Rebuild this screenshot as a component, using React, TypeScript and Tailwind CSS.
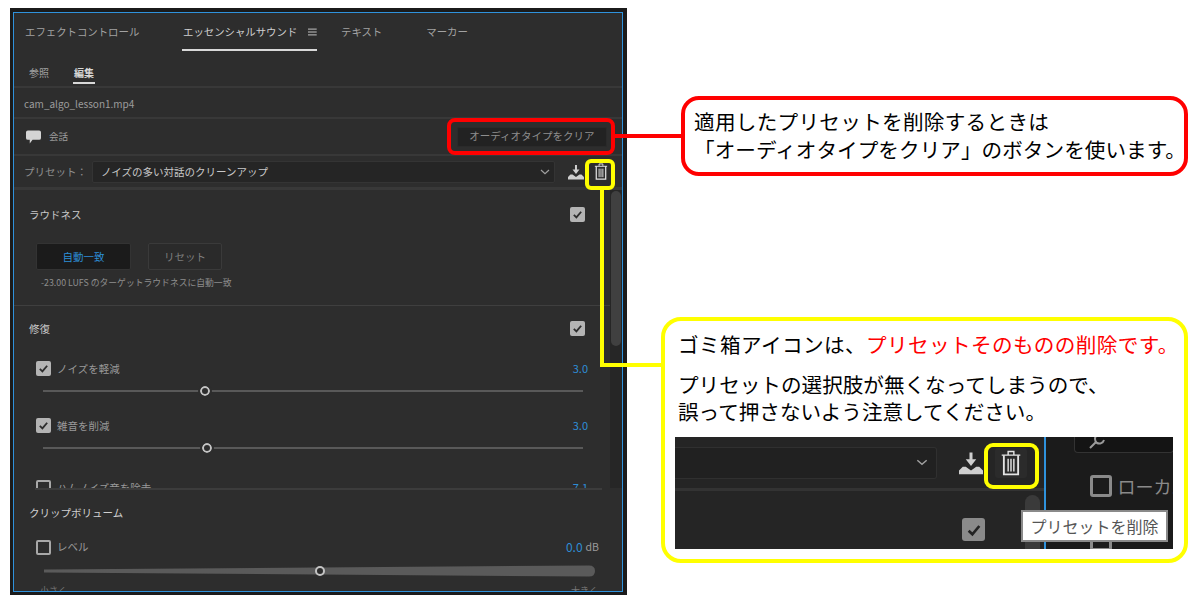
const Check = ({ on = false }: { on?: boolean }) =>
  on ? (
    <span className="flex h-[15px] w-[15px] shrink-0 items-center justify-center rounded-[2px] bg-[#b4b4b4]">
      <svg viewBox="0 0 12 12" className="h-[11px] w-[11px]">
        <path d="M2 6.5 L4.8 9.2 L10 3" fill="none" stroke="#2d2d2d" strokeWidth="2" />
      </svg>
    </span>
  ) : (
    <span className="h-[15px] w-[15px] shrink-0 rounded-[2px] border-2 border-[#a8a8a8]" />
  );

const Trash = ({ className }: { className: string }) => (
  <svg viewBox="0 0 14 18" className={className} fill="none" stroke="#e4e4e4" strokeWidth="1">
    <path d="M0.5 3.5 H13.5 M5 3 V1 H9 V3" />
    <path d="M2 3.5 V17 H12 V3.5" strokeWidth="1.3" />
    <path d="M5 6 V15 M7 6 V15 M9 6 V15" />
  </svg>
);

const Download = ({ className }: { className: string }) => (
  <svg viewBox="0 0 16 16" className={className} fill="#cfcfcf">
    <path d="M7 1 H9 V5.5 H11.5 L8 10 L4.5 5.5 H7 Z" />
    <path d="M0 15.5 V13 L2.5 10.5 H4.5 L8 13 L11.5 10.5 H13.5 L16 13 V15.5 Z" />
  </svg>
);

const Chevron = ({ className }: { className: string }) => (
  <svg viewBox="0 0 10 6" className={className} fill="none" stroke="#a0a0a0" strokeWidth="1.2">
    <path d="M1 1 L5 4.6 L9 1" />
  </svg>
);

function SliderRow({ label, value, knob, on, mb }: { label: string; value: string; knob: number; on: boolean; mb: string }) {
  return (
    <div className={mb}>
      <div className="flex h-[15px] items-center pl-[22px] pr-[22px]">
        <Check on={on} />
        <span className="ml-[6px] text-[10.5px] text-[#9a9a9a]">{label}</span>
        <span className="ml-auto text-[11px] text-[#2d8ed6]">{value}</span>
      </div>
      <div className="relative ml-[29px] mr-[27px] mt-[14px] h-[2px] bg-[#595959]">
        <span
          className="absolute top-[-4px] box-content h-[6px] w-[6px] rounded-full border-2 border-[#c4c4c4] bg-[#2d2d2d] outline-2 outline-[#2d2d2d]"
          style={{ left: knob - 5 }}
        />
      </div>
    </div>
  );
}

export default function App() {
  return (
    <div className="relative flex h-[600px] w-[1200px] items-start overflow-hidden bg-white font-['Noto_Sans_CJK_JP','Noto_Sans',sans-serif] text-black">
      <div className="ml-[10px] mt-[8px] h-[587px] w-[617px] bg-[#1b1b1b] pb-[3px] pl-[3px] pr-[4px] pt-[4px]">
        <div className="flex h-full flex-col overflow-hidden border-[1.5px] border-[#2f92dc] bg-[#2d2d2d]">
          {/* tabs */}
          <div className="flex h-[38px] shrink-0 items-stretch whitespace-nowrap pl-[11px] text-[10.4px] text-[#a2a2a2]">
            <span className="flex w-[114px] items-center">エフェクトコントロール</span>
            <span className="ml-[43px] flex w-[135px] items-center border-b-2 border-[#d8d8d8] pl-[1px] pt-[2px] text-[#d0d0d0]">
              エッセンシャルサウンド
              <svg viewBox="0 0 9 8" className="ml-[11px] h-[8px] w-[9px]" stroke="#c8c8c8" strokeWidth="1">
                <path d="M0 1 H9 M0 4 H9 M0 7 H9" />
              </svg>
            </span>
            <span className="ml-[24px] flex items-center">テキスト</span>
            <span className="ml-[44px] flex items-center">マーカー</span>
          </div>
          <div className="flex h-[37px] shrink-0 items-end gap-[25px] border-b-2 border-[#383838] pb-[2px] pl-[15px] text-[10px]">
            <span className="pb-[4px] text-[#a2a2a2]">参照</span>
            <span className="-ml-px border-b-2 border-[#d8d8d8] px-[1px] pb-[2px] font-bold text-[#d8d8d8]">編集</span>
          </div>
          {/* clip */}
          <div className="flex h-[31px] shrink-0 items-center border-b-2 border-[#383838] pl-[10px] pt-[1px] text-[10px] text-[#9c9c9c]">
            cam_algo_lesson1.mp4
          </div>
          <div className="flex h-[37px] shrink-0 items-center border-b-2 border-[#383838] pl-[12px] pr-[15px]">
            <svg viewBox="0 0 16 14" className="h-[14px] w-[15px]" fill="#d4d4d4">
              <path d="M2 0 H14 Q16 0 16 2 V8 Q16 10 14 10 H7 L4 14 V10 H2 Q0 10 0 8 V2 Q0 0 2 0 Z" />
            </svg>
            <span className="ml-[8px] text-[9.5px] text-[#9c9c9c]">会話</span>
            <button className="ml-auto flex h-[20px] w-[150px] items-center justify-center rounded-[2px] border border-[#2a2a2a] bg-[#222222] pb-[1px] text-[10.5px] text-[#8e8e8e]">
              オーディオタイプをクリア
            </button>
          </div>
          <div className="flex h-[34px] shrink-0 items-center border-b-[3px] border-[#383838] pl-[10px] pr-[14px]">
            <span className="w-[68px] text-[10.5px] text-[#8e8e8e]">プリセット：</span>
            <div className="flex h-[22px] w-[464px] items-center justify-between rounded-[2px] border border-[#343434] bg-[#252525] pl-[8px] pr-[4px] text-[10.5px] text-[#c8c8c8]">
              ノイズの多い対話のクリーンアップ
              <Chevron className="h-[6px] w-[10px]" />
            </div>
            <Download className="ml-[13px] h-[16px] w-[16px]" />
            <Trash className="ml-[10px] h-[17px] w-[14px]" />
          </div>
          {/* scrolling area */}
          <div className="flex h-[298px] shrink-0 overflow-hidden">
            <div className="min-w-0 flex-1 overflow-hidden">
              <div className="flex h-[116px] flex-col border-b border-[#3f3f3f] pl-[15px]">
                <div className="mt-[17px] flex h-[15px] items-center pr-[25px]">
                  <span className="text-[10.5px] text-[#c8c8c8]">ラウドネス</span>
                  <span className="ml-auto"><Check on /></span>
                </div>
                <div className="ml-[7px] mt-[21px] flex gap-[17px] text-[10.5px]">
                  <button className="h-[27px] w-[95px] rounded-[2px] border border-[#333333] bg-[#1b1b1b] text-[#2d8ed6]">自動一致</button>
                  <button className="h-[27px] w-[74px] rounded-[2px] border border-[#3a3a3a] bg-[#2a2a2a] text-[#7e7e7e]">リセット</button>
                </div>
                <p className="ml-[12px] mt-[6px] text-[8.8px] text-[#8e8e8e]">-23.00 LUFS のターゲットラウドネスに自動一致</p>
              </div>
              <div className="mt-[15px] flex h-[15px] items-center pl-[15px] pr-[25px]">
                <span className="text-[10.5px] text-[#c8c8c8]">修復</span>
                <span className="ml-auto"><Check on /></span>
              </div>
              <div className="mt-[25px]">
                <SliderRow label="ノイズを軽減" value="3.0" knob={162} on mb="mb-[26px]" />
                <SliderRow label="雑音を削減" value="3.0" knob={164} on mb="mb-[31px]" />
                <SliderRow label="ハムノイズ音を除去" value="7.1" knob={164} on={false} mb="" />
              </div>
            </div>
            <div className="w-[12px] shrink-0 bg-[#262626] px-[1px] pt-[1px]">
              <div className="h-[155px] rounded-full bg-[#404040]" />
            </div>
          </div>
          {/* clip volume */}
          <div className="min-h-0 flex-1 overflow-hidden">
            <div className="ml-[21px] mr-[20px] h-[2px] bg-[#3c3c3c]" />
            <div className="mt-[15px] pl-[15px] text-[10.5px] text-[#d0d0d0]">クリップボリューム</div>
            <div className="mt-[19px] flex h-[15px] items-center pl-[22px] pr-[23px]">
              <Check />
              <span className="ml-[6px] text-[10.5px] text-[#9a9a9a]">レベル</span>
              <span className="ml-auto text-[12px] text-[#2d8ed6]">0.0</span>
              <span className="ml-[3px] text-[10.5px] text-[#9a9a9a]">dB</span>
            </div>
            <div className="relative ml-[30px] mr-[27px] mt-[10px] h-[12px]">
              <svg viewBox="0 0 551 12" preserveAspectRatio="none" className="h-[12px] w-[551px]">
                <path d="M0 4.5 L545 0.5 Q551 0.5 551 6 Q551 11.5 545 11.5 L0 7.5 Z" fill="#5a5a5a" />
              </svg>
              <span className="absolute left-[271px] top-[1px] box-content h-[6px] w-[6px] rounded-full border-2 border-[#c4c4c4] bg-[#2d2d2d]" />
            </div>
            <div className="mt-[7px] flex justify-between pl-[26px] pr-[24px] text-[9px] text-[#777777]">
              <span>小さく</span>
              <span>大きく</span>
            </div>
          </div>
        </div>
      </div>

      <div className="ml-[34px] flex w-[527px] flex-col items-end">
        <div className="mt-[96px] h-[80px] w-[507px] rounded-[18px] border-[4px] border-[#ff0000] bg-white pl-[9px] pt-[7px] text-[20.6px] leading-[28px]">
          <p className="tracking-[0.3px]">適用したプリセットを削除するときは</p>
          <p className="whitespace-nowrap tracking-[0.05px]">「オーディオタイプをクリア」のボタンを使います。</p>
        </div>
        <div className="mt-[141px] h-[246px] w-[527px] rounded-[20px] border-[4px] border-[#ffff00] bg-white pl-[10px] pt-[9px]">
          <p className="whitespace-nowrap pl-[3px] text-[20.6px] leading-[28px] tracking-[0.4px]">
            ゴミ箱アイコンは、<span className="text-[#ff0000]">プリセットそのものの削除です。</span>
          </p>
          <p className="mt-[13px] whitespace-nowrap pl-[3px] text-[20.6px] leading-[27px]">
            プリセットの選択肢が無くなってしまうので、
            <br />
            誤って押さないよう注意してください。
          </p>
          <div className="relative mt-[12px] flex h-[112px] w-[498px] overflow-hidden bg-[#252525]">
            <div className="flex h-full w-[369px] shrink-0 flex-col">
              <div className="flex h-[54px] shrink-0 items-center border-b-[3px] border-[#333333]">
                <div className="flex h-[32px] w-[262px] items-center justify-end rounded-r-[3px] border border-l-0 border-[#303030] bg-[#212121] pr-[7px]">
                  <Chevron className="h-[7px] w-[14px]" />
                </div>
                <Download className="ml-[21px] h-[24px] w-[26px]" />
                <div className="ml-[11px] flex h-[30px] w-[32px] items-center justify-center rounded-[3px] bg-[#2b2b2b]">
                  <Trash className="h-[26px] w-[20px]" />
                </div>
              </div>
              <div className="flex flex-1 justify-end pr-[59px] pt-[27px]">
                <span className="flex h-[23px] w-[23px] items-center justify-center rounded-[3px] bg-[#8a8a8a]">
                  <svg viewBox="0 0 12 12" className="h-[16px] w-[16px]">
                    <path d="M2 6.5 L4.8 9.2 L10 3" fill="none" stroke="#222222" strokeWidth="2" />
                  </svg>
                </span>
              </div>
            </div>
            <div className="w-[1.5px] shrink-0 bg-[#2f92dc]" />
            <div className="flex-1 bg-[#1b1b1b] pl-[28px]">
              <div className="relative h-[16px] w-[100px] rounded-b-[4px] border border-t-0 border-[#333333] bg-[#141414]">
                <svg viewBox="0 0 16 12" className="absolute left-[14px] top-0 h-[12px] w-[16px]" fill="none" stroke="#9a9a9a" strokeWidth="2">
                  <path d="M1 11 L7 5 M8 -2 A5 5 0 0 0 8 6 A5 5 0 0 0 15 3" />
                </svg>
              </div>
              <div className="ml-[16px] mt-[22px] flex items-center gap-[6px] text-[18px] leading-[22px] text-[#8a8a8a]">
                <span className="h-[22px] w-[22px] shrink-0 rounded-[3px] border-[3px] border-[#8a8a8a]" />
                <span className="whitespace-nowrap">ローカル</span>
              </div>
              <div className="ml-[16px] mt-[32px] h-[22px] w-[22px] rounded-[3px] border-[3px] border-[#8a8a8a]" />
            </div>
            <div className="absolute left-[350px] top-[58px] h-[60px] w-[15px] rounded-t-full bg-[#3a3a3a]" />
            <div className="absolute left-[346px] top-[73px] flex h-[32px] w-[147px] items-center justify-center whitespace-nowrap border-2 border-[#8a8a8a] bg-white text-[16px] text-[#555555]">
              プリセットを削除
            </div>
            <div className="absolute left-[309px] top-[6px] h-[46px] w-[55px] rounded-[9px] border-[4px] border-[#ffff00]" />
          </div>
        </div>
      </div>

      {/* annotation marks over the panel */}
      <div className="absolute left-[447px] top-[118px] h-[37px] w-[168px] rounded-[8px] border-[4px] border-[#ff0000]" />
      <div className="absolute left-[615px] top-[134px] h-[4px] w-[66px] bg-[#ff0000]" />
      <div className="absolute left-[585px] top-[159px] h-[31px] w-[30px] rounded-[6px] border-[4px] border-[#ffff00]" />
      <div className="absolute left-[600px] top-[190px] h-[177px] w-[4px] bg-[#ffff00]" />
      <div className="absolute left-[600px] top-[363px] h-[4px] w-[61px] bg-[#ffff00]" />
    </div>
  );
}
